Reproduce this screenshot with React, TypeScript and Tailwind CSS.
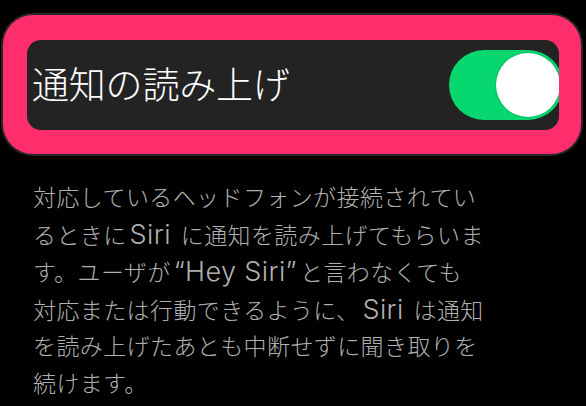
import { useState } from "react"

// Latin words are set a bit larger, like the reference's system font
const Latin = ({ children }: { children: string }) => (
    <span className="text-[27px] font-light tracking-[0.4px] mx-[3px]">{children}</span>
)

export default function App() {
    const [enabled, setEnabled] = useState(true)

    return (
        <div className="w-[586px] h-[406px] bg-black pt-[13px] pl-[1px] pr-[3px] overflow-hidden"
            style={{ fontFamily: 'Inter, "Noto Sans CJK JP", "Noto Sans", sans-serif' }}>
            <div className="h-[143px] rounded-[32px] bg-[#262626] pt-[2px] pl-[2px] pr-[2px] pb-[2px]">
                <div className="h-[139px] rounded-[30px] bg-[#fe2d6c] pt-[25px] pl-[24px] pr-[22px] pb-[24px]">
                    <div className="h-[90px] rounded-[14px] bg-[#232323] overflow-hidden flex items-center pl-[5px]">
                        <span className="text-[37px] leading-none font-light text-white tracking-[-0.2px]">通知の読み上げ</span>
                        <button onClick={() => setEnabled(!enabled)}
                            className={`ml-auto -mr-[4px] w-[114px] h-[70px] rounded-full p-[3px] flex items-center ${enabled ? "justify-end bg-[#06d86f]" : "justify-start bg-[#3a3a3a]"}`}>
                            <span className="block w-[64px] h-[64px] rounded-full bg-white shadow-[0_0_2px_rgba(0,0,0,0.35)]" />
                        </button>
                    </div>
                </div>
            </div>
            <p className="mt-[24px] pl-[32px] text-[23px] leading-[36.5px] font-light tracking-[0.4px] text-[#b0b0b0]">
                <span className="block whitespace-nowrap">対応しているヘッドフォンが接続されてい</span>
                <span className="block whitespace-nowrap">るときに<Latin>Siri</Latin> に通知を読み上げてもらいま</span>
                <span className="block whitespace-nowrap">す。ユーザが<Latin>“Hey Siri”</Latin>と言わなくても</span>
                <span className="block whitespace-nowrap">対応または行動できるように、<Latin>Siri</Latin> は通知</span>
                <span className="block whitespace-nowrap">を読み上げたあとも中断せずに聞き取りを</span>
                <span className="block whitespace-nowrap">続けます。</span>
            </p>
        </div>
    )
}
